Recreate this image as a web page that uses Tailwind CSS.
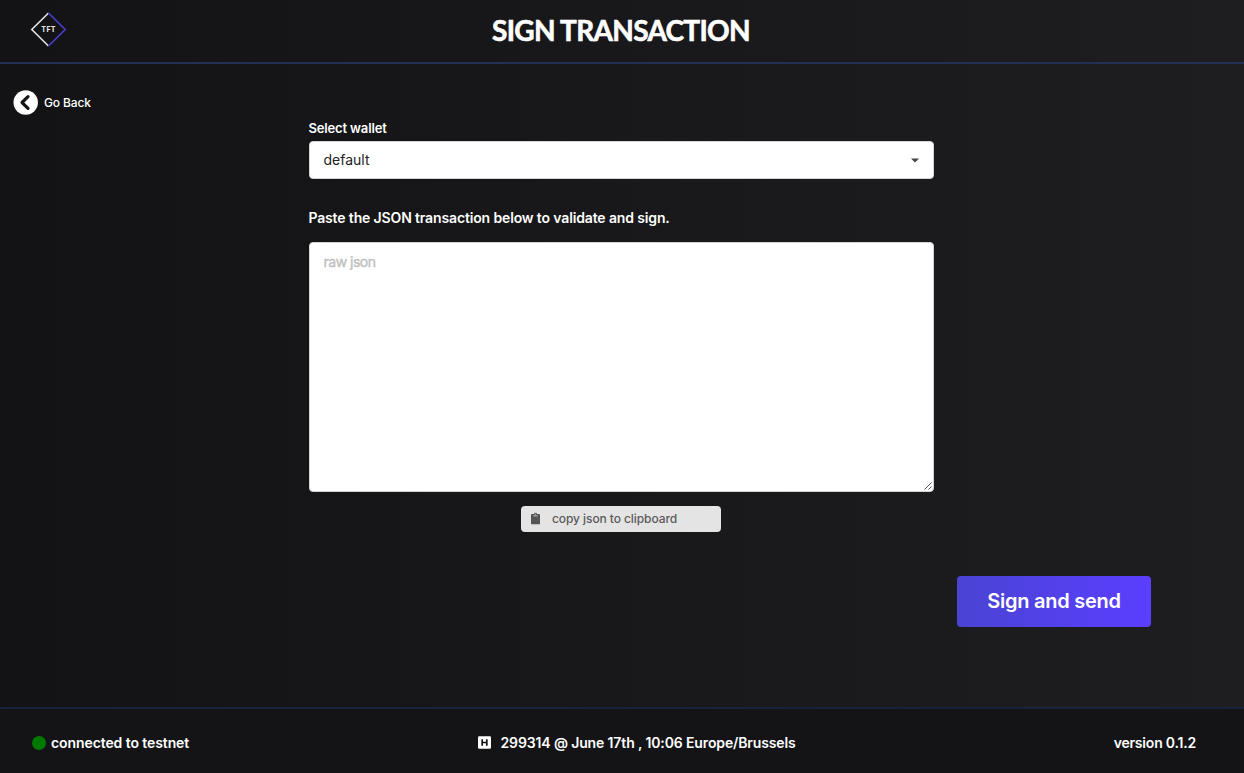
<!DOCTYPE html>
<html lang="en">
<head>
<meta charset="utf-8">
<title>Sign transaction</title>
<script src="https://cdn.jsdelivr.net/npm/@tailwindcss/browser@4"></script>
</head>
<body class="h-[773px] w-[1244px] overflow-hidden flex flex-col bg-linear-to-r from-[#131315] to-[#1e1e20] text-white font-['Inter',sans-serif] text-sm font-semibold">
<header class="relative h-16 shrink-0 border-b-2 border-[#223052] flex items-center justify-center pb-[2px]">
  <svg class="absolute left-[30px] top-[11px]" width="37" height="37" viewBox="0 0 37 37" fill="none" stroke-width="1.6">
    <path d="M18.5 2L1.8 18.5L18.5 35" stroke="#e4e4e4"/>
    <path d="M18.5 2L35.2 18.5L18.5 35" stroke="#4a3fd0"/>
    <text x="18.6" y="20.6" text-anchor="middle" font-family="Inter" font-size="7" font-weight="800" letter-spacing=".3" fill="#ddd">TFT</text>
  </svg>
  <h1 class="font-['Lato',sans-serif] font-bold text-[28px] leading-8 tracking-[-0.7px] [-webkit-text-stroke:0.6px_white] -translate-x-px whitespace-nowrap">SIGN TRANSACTION</h1>
</header>
<main class="flex-1 flex">
  <div class="w-[308px] shrink-0 pt-[26px] pl-[13px]">
    <a class="flex items-center gap-[6px] text-[12px] font-medium tracking-[-0.13px]">
      <svg width="25" height="25" viewBox="0 0 25 25"><circle cx="12.7" cy="12.5" r="12.2" fill="#fff"/><path d="M15 6.6L9 12.5L15 18.4" fill="none" stroke="#161618" stroke-width="3.2" stroke-linecap="round" stroke-linejoin="round"/></svg>
      <span>Go Back</span>
    </a>
  </div>
  <div class="w-[626px] pl-px shrink-0 pt-[54px] flex flex-col">
    <label class="-ml-px pl-[.4px] text-[13px] leading-5 tracking-[-0.14px] h-[23px]"><span>Select wallet</span></label>
    <div class="h-[38px] rounded bg-white border border-[#d4d4d5] text-[#222] font-normal flex items-center justify-between pl-[13.5px] pr-[14px]">
      <span>default</span>
      <svg width="8" height="5" viewBox="0 0 8 5"><path d="M0 .5H8L4 4.6Z" fill="#444"/></svg>
    </div>
    <p class="-ml-px pl-[.4px] mt-[29px] leading-5 tracking-[-0.14px]"><span>Paste the JSON transaction below to validate and sign.</span></p>
    <div class="relative mt-[14px] h-[250px] rounded bg-white border border-[#d4d4d5] pl-[13.5px] pt-[9px] text-[#bfbfbf] font-normal tracking-[-0.5px] [-webkit-text-stroke:0.4px_#bfbfbf] leading-5">
      <span>raw json</span>
      <svg class="absolute right-0 bottom-0" width="10" height="10" viewBox="0 0 10 10" stroke="#555" stroke-width="1"><path d="M1.5 8.5L8.5 1.5M5.5 8.5L8.5 5.5"/></svg>
    </div>
    <button class="mt-[14px] ml-[212px] w-[200px] h-[26px] rounded bg-[#e4e4e4] text-[#5a5a5a] text-[12px] font-medium tracking-[-0.08px] flex items-center pl-[10px] gap-[12px]">
      <svg class="-translate-y-[.5px]" width="9" height="12" viewBox="0 0 384 512"><path fill="#555" d="M384 112v352c0 26.5-21.5 48-48 48H48c-26.500 0-48-21.500-48-48V112c0-26.500 21.500-48 48-48h80c0-35.300 28.700-64 64-64s64 28.700 64 64h80c26.500 0 48 21.500 48 48zM192 40c-13.300 0-24 10.700-24 24s10.700 24 24 24 24-10.700 24-24-10.700-24-24-24m96 114v-20a6 6 0 0 0-6-6H102a6 6 0 0 0-6 6v20a6 6 0 0 0 6 6h180a6 6 0 0 0 6-6z"/></svg>
      <span>copy json to clipboard</span>
    </button>
  </div>
  <div class="flex-1 pt-[512px] pl-[23px]">
    <button class="w-[194px] h-[51px] rounded bg-linear-to-r from-[#4a43d3] to-[#5b3eff] text-[20px] tracking-[-0.25px] flex items-center justify-center"><span>Sign and send</span></button>
  </div>
</main>
<footer class="h-[66px] shrink-0 border-t-2 border-[#18223f] bg-[#141416] flex items-center pl-8 pr-12 pt-[3px]">
  <div class="w-[446px] flex items-center gap-[5px] tracking-[-0.09px]"><i class="size-[14px] rounded-full bg-[#007a00]"></i><span>connected to testnet</span></div>
  <div class="flex-1 flex items-center gap-[9.5px] tracking-[-0.13px]">
    <svg width="13" height="13" viewBox="0 0 13 13"><rect width="13" height="12.5" y=".2" rx="1.2" fill="#fff"/><path d="M4.2 3.2V9.8M8.8 3.2V9.8M4.2 6.5H8.8" stroke="#141416" stroke-width="1.7"/></svg>
    <span>299314 @ June 17th , 10:06 Europe/Brussels</span>
  </div>
  <span class="tracking-[-0.2px]">version 0.1.2</span>
</footer>
</body>
</html>
